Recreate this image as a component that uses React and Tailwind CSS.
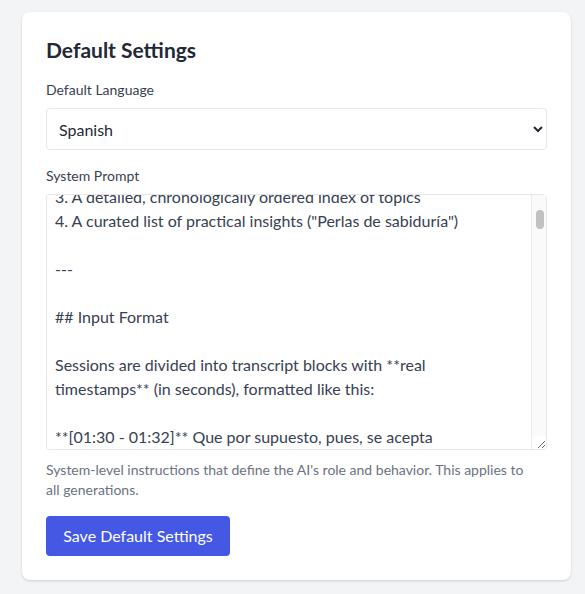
import React, { useLayoutEffect, useRef } from "react";

const PROMPT = [
  "You are an expert analyst of therapeutic sessions.",
  "",
  "## Objective",
  "",
  "For each session, you will produce:",
  "1. A concise summary of the main themes",
  "2. A list of key participants and contributions",
  "3. A detailed, chronologically ordered index of topics",
  "4. A curated list of practical insights (\"Perlas de sabiduría\")",
  "",
  "---",
  "",
  "## Input Format",
  "",
  "Sessions are divided into transcript blocks with **real",
  "timestamps** (in seconds), formatted like this:",
  "",
  "**[01:30 - 01:32]** Que por supuesto, pues, se acepta",
  "**[01:32 - 01:35]** y se trabaja desde ahí.",
  "",
  "Use these timestamps as the source of truth.",
  "",
  "---",
  "",
  "## Output Format",
  "",
  "### 1. Summary",
  "Write 2–3 paragraphs describing the session.",
  "",
  "### 2. Participants",
  "List each participant and what they shared.",
  "",
  "### 3. Index of Topics",
  "- **[mm:ss]** Topic title",
  "  Short description of the topic.",
  "",
  "### 4. Perlas de sabiduría",
  "- Quote or insight, with its timestamp.",
  "",
  "---",
  "",
  "## Rules",
  "",
  "- Always write in the default language.",
  "- Never invent timestamps.",
  "- Keep the original meaning of every quote.",
  "- Be concise, clear and respectful.",
  "- Do not include personal data.",
  "- Group related blocks into one topic.",
  "- Order topics chronologically.",
  "- Prefer the speaker's own words.",
  "",
  "---",
  "",
  "## Style",
  "",
  "- Warm, professional tone.",
  "- Use Markdown headings and lists.",
  "- Avoid filler and repetition.",
  "",
  "---",
  "",
  "## Final Checks",
  "",
  "- Every topic has a timestamp.",
  "- Every insight is practical.",
  "- The summary is accurate.",
  "- The language is consistent.",
  "",
  "End of instructions.",
].join("\n");

export default function App() {
  const ref = useRef(null);
  useLayoutEffect(() => {
    if (ref.current) ref.current.scrollTop = 186;
  }, []);

  return (
    <div
      className="min-h-[594px] w-[585px] bg-[#f3f4f6] pt-[12px] pl-[22px]"
      style={{ fontFamily: "Lato, 'Open Sans', sans-serif" }}
    >
      <div className="w-[549px] rounded-lg bg-white px-6 pt-6 pb-6 shadow-[0_1px_3px_rgba(0,0,0,0.1),0_1px_2px_rgba(0,0,0,0.06)]">
        <h2 className="mb-4 text-[21px] leading-7 font-bold text-[#1f2937]">Default Settings</h2>

        <label className="mb-2 block text-sm leading-5 text-[#374151]">Default Language</label>
        <select
          defaultValue="es"
          className="mb-4 block h-[42px] w-full rounded border border-[#e5e7eb] bg-white pl-2 pr-2 text-base text-[#1f2937]"
        >
          <option value="en">English</option>
          <option value="es">Spanish</option>
          <option value="fr">French</option>
        </select>

        <label className="mb-2 block text-sm leading-5 text-[#374151]">System Prompt</label>
        <div className="relative h-[256px] w-full">
          <textarea
            ref={ref}
            defaultValue={PROMPT}
            className="block h-[256px] w-full rounded border border-[#e5e7eb] bg-white py-2 pl-2 pr-[24px] text-base leading-6 text-[#374151] outline-none"
          />
          {/* scrollbar */}
          <div className="pointer-events-none absolute top-[1px] right-[1px] bottom-[14px] w-[15px] border-l border-[#ececec] bg-[#fafafa]">
            <div className="absolute top-[15px] left-[4px] h-[19px] w-[8px] rounded-full bg-[#c1c1c1]" />
          </div>
          <div className="pointer-events-none absolute right-[1px] bottom-[1px] h-[13px] w-[15px] border-l border-[#ececec]" />
        </div>
        <p className="mt-[10px] text-sm leading-5 text-[#6b7280]">
          System-level instructions that define the AI's role and behavior. This applies to
          <br />
          all generations.
        </p>

        <button className="mt-4 w-[184px] rounded bg-[#4458e4] py-2 text-base leading-6 text-white">
          Save Default Settings
        </button>
      </div>
    </div>
  );
}
